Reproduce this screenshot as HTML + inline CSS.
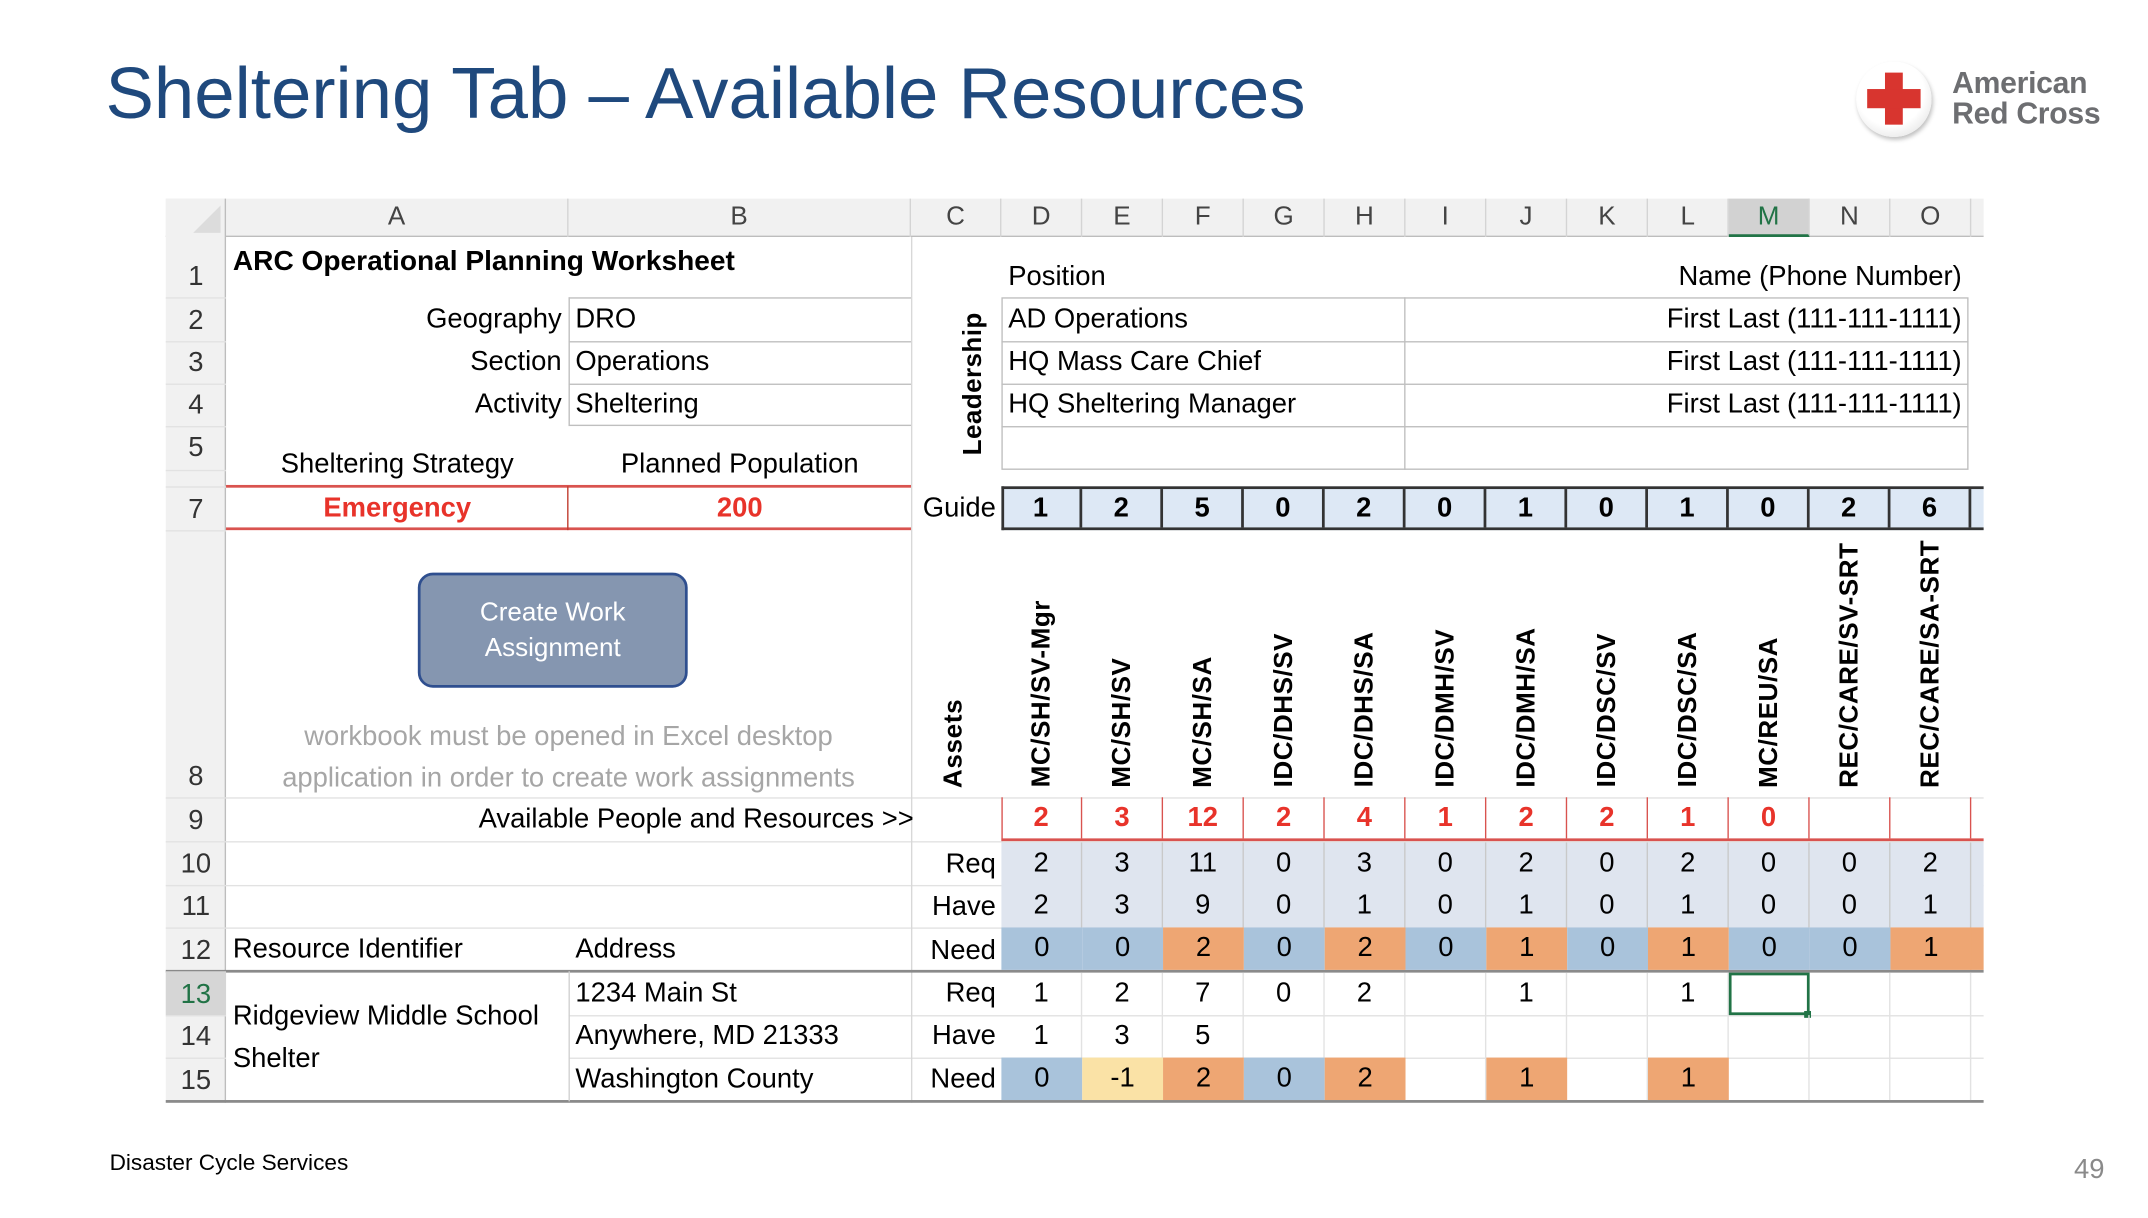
<!DOCTYPE html>
<html><head><meta charset="utf-8"><style>
*{margin:0;padding:0;box-sizing:border-box}
html,body{width:2148px;height:1218px;overflow:hidden;background:#fff}
#w{position:absolute;left:0;top:0;width:1568px;height:889px;transform:scale(1.3699);transform-origin:0 0;font-family:"Liberation Sans",sans-serif;color:#000}
.a{position:absolute;white-space:nowrap}
.t{font-size:20px;letter-spacing:0}
.rw{position:absolute;left:731px;display:flex}
.rw div{width:59px;text-align:center;border-right:1px solid #c9c9c9;font-size:20px}
.rn{position:absolute;left:121px;width:44px;text-align:center;font-size:20px;color:#333}
.ch{position:absolute;top:145px;height:28px;line-height:28px;text-align:center;font-size:19px;color:#444;border-right:1px solid #d4d4d4}
.hl{position:absolute;left:121px;width:1327px;height:1px;background:#e2e2e2}
.v{position:absolute;bottom:314px;writing-mode:vertical-rl;transform:rotate(180deg);font-weight:bold;font-size:19px;letter-spacing:0.4px;white-space:nowrap;width:22px}
.b{background:#a9c3db}.o{background:#eea673}.y{background:#fae2a6}.l{background:#dfe5ef}
</style></head><body><div id="w">
<div class="a" style="left:77px;top:38px;font-size:53px;color:#1f497d">Sheltering Tab – Available Resources</div>
<div class="a" style="left:1355px;top:45px;width:55px;height:55px;border-radius:50%;background:radial-gradient(circle at 45% 40%,#fff 55%,#e4e4e4 85%,#cfcfcf);box-shadow:1px 2px 3px rgba(0,0,0,.25)"></div>
<div class="a" style="left:1376px;top:53px;width:13px;height:38px;background:#d8352f"></div>
<div class="a" style="left:1363px;top:65px;width:39px;height:14px;background:#d8352f"></div>
<div class="a" style="left:1425px;top:50px;font-size:22px;font-weight:bold;color:#6d6e71;line-height:22px;letter-spacing:-0.2px">American<br>Red Cross</div>

<div class="a" style="left:121px;top:145px;width:1327px;height:28px;background:#f1f1f1;border-bottom:1px solid #bdbdbd"></div>
<div class="a" style="left:121px;top:145px;width:44px;height:660px;background:#f1f1f1;border-right:1px solid #bdbdbd"></div>
<div class="a" style="left:141px;top:150px;width:0;height:0;border-left:20px solid transparent;border-bottom:20px solid #dcdcdc"></div>
<div class="ch" style="left:165px;width:250px">A</div>
<div class="ch" style="left:415px;width:250px">B</div>
<div class="ch" style="left:665px;width:66px">C</div>
<div class="ch" style="left:731px;width:59px">D</div>
<div class="ch" style="left:790px;width:59px">E</div>
<div class="ch" style="left:849px;width:59px">F</div>
<div class="ch" style="left:908px;width:59px">G</div>
<div class="ch" style="left:967px;width:59px">H</div>
<div class="ch" style="left:1026px;width:59px">I</div>
<div class="ch" style="left:1085px;width:59px">J</div>
<div class="ch" style="left:1144px;width:59px">K</div>
<div class="ch" style="left:1203px;width:59px">L</div>
<div class="ch" style="left:1262px;width:59px;background:#d2d2d2;border-bottom:2px solid #217346;color:#217346">M</div>
<div class="ch" style="left:1321px;width:59px">N</div>
<div class="ch" style="left:1380px;width:59px">O</div>

<div class="hl" style="top:217px;left:121px;width:44px"></div>
<div class="hl" style="top:249px;width:44px"></div><div class="hl" style="top:280px;width:44px"></div><div class="hl" style="top:311px;width:44px"></div><div class="hl" style="top:343px;width:44px"></div><div class="hl" style="top:355px;width:44px"></div><div class="hl" style="top:387px;width:44px"></div>
<div class="hl" style="top:582px"></div><div class="hl" style="top:614px"></div><div class="hl" style="top:646px"></div><div class="hl" style="top:677px"></div><div class="hl" style="top:741px;left:121px;width:44px"></div><div class="hl" style="top:741px;left:415px;width:1033px"></div><div class="hl" style="top:772px;left:415px;width:1033px"></div><div class="hl" style="top:772px;width:44px"></div>
<div class="a" style="left:665px;top:173px;width:1px;height:632px;background:#d8d8d8"></div>
<div class="a" style="left:121px;top:708px;width:1327px;height:2px;background:#8a8a8a"></div>
<div class="a" style="left:121px;top:803px;width:1327px;height:2px;background:#8a8a8a"></div>
<div class="a" style="left:415px;top:709px;width:1px;height:95px;background:#d0d0d0"></div>
<div class="a" style="left:121px;top:709px;width:44px;height:32px;background:#d6d6d6"></div>

<div class="rn" style="top:191px">1</div><div class="rn" style="top:223px">2</div><div class="rn" style="top:254px">3</div><div class="rn" style="top:285px">4</div><div class="rn" style="top:316px">5</div><div class="rn" style="top:361px">7</div><div class="rn" style="top:556px">8</div><div class="rn" style="top:588px">9</div><div class="rn" style="top:620px">10</div><div class="rn" style="top:651px">11</div><div class="rn" style="top:683px">12</div><div class="rn" style="top:715px;color:#217346">13</div><div class="rn" style="top:746px">14</div><div class="rn" style="top:778px">15</div>

<div class="a" style="left:170px;top:179px;font-weight:bold;font-size:20.5px">ARC Operational Planning Worksheet</div>
<div class="a" style="left:415px;top:217px;width:250px;height:94px;border:1px solid #bfbfbf;border-right:none"></div>
<div class="a" style="left:415px;top:249px;width:250px;height:1px;background:#bfbfbf"></div>
<div class="a" style="left:415px;top:280px;width:250px;height:1px;background:#bfbfbf"></div>
<div class="a t" style="left:165px;width:245px;text-align:right;top:222px">Geography</div>
<div class="a t" style="left:165px;width:245px;text-align:right;top:253px">Section</div>
<div class="a t" style="left:165px;width:245px;text-align:right;top:284px">Activity</div>
<div class="a t" style="left:420px;top:222px">DRO</div>
<div class="a t" style="left:420px;top:253px">Operations</div>
<div class="a t" style="left:420px;top:284px">Sheltering</div>
<div class="a t" style="left:165px;width:250px;text-align:center;top:328px">Sheltering Strategy</div>
<div class="a t" style="left:415px;width:250px;text-align:center;top:328px">Planned Population</div>
<div class="a" style="left:165px;top:354px;width:500px;height:33px;border-top:2px solid #d9534f;border-bottom:2px solid #d9534f"></div>
<div class="a" style="left:414px;top:355px;width:1px;height:32px;background:#c0392b"></div>
<div class="a t" style="left:165px;width:250px;text-align:center;top:360px;color:#e8332a;font-weight:bold">Emergency</div>
<div class="a t" style="left:415px;width:250px;text-align:center;top:360px;color:#e8332a;font-weight:bold">200</div>
<div class="a" style="left:305px;top:418px;width:197px;height:84px;border-radius:11px;background:#8596b0;border:2px solid #2f4f8f;color:#fff;font-size:19px;text-align:center;line-height:26px;padding-top:15px">Create Work<br>Assignment</div>
<div class="a t" style="left:165px;width:500px;text-align:center;top:523px;color:#a6a6a6;line-height:30px">workbook must be opened in Excel desktop<br>application in order to create work assignments</div>
<div class="a t" style="left:165px;width:502px;text-align:right;top:587px">Available People and Resources &gt;&gt;</div>
<div class="a t" style="left:170px;top:682px">Resource Identifier</div>
<div class="a t" style="left:420px;top:682px">Address</div>
<div class="a t" style="left:170px;top:727px;line-height:31px">Ridgeview Middle School<br>Shelter</div>
<div class="a t" style="left:420px;top:714px">1234 Main St</div>
<div class="a t" style="left:420px;top:745px">Anywhere, MD 21333</div>
<div class="a t" style="left:420px;top:777px">Washington County</div>

<div class="v" style="left:700px;bottom:auto;top:228px;font-size:19px;letter-spacing:0.3px">Leadership</div>
<div class="a t" style="left:736px;top:191px">Position</div>
<div class="a t" style="left:1030px;width:402px;text-align:right;top:191px">Name (Phone Number)</div>
<div class="a" style="left:731px;top:217px;width:706px;height:126px;border:1px solid #bfbfbf"></div>
<div class="a" style="left:731px;top:249px;width:706px;height:1px;background:#bfbfbf"></div>
<div class="a" style="left:731px;top:280px;width:706px;height:1px;background:#bfbfbf"></div>
<div class="a" style="left:731px;top:311px;width:706px;height:1px;background:#bfbfbf"></div>
<div class="a" style="left:1025px;top:217px;width:1px;height:126px;background:#bfbfbf"></div>
<div class="a t" style="left:736px;top:222px">AD Operations</div>
<div class="a t" style="left:736px;top:253px">HQ Mass Care Chief</div>
<div class="a t" style="left:736px;top:284px">HQ Sheltering Manager</div>
<div class="a t" style="left:1030px;width:402px;text-align:right;top:222px">First Last (111-111-1111)</div>
<div class="a t" style="left:1030px;width:402px;text-align:right;top:253px">First Last (111-111-1111)</div>
<div class="a t" style="left:1030px;width:402px;text-align:right;top:284px">First Last (111-111-1111)</div>

<div class="a t" style="left:665px;width:62px;text-align:right;top:360px">Guide</div>
<div class="a" style="left:731px;top:355px;width:717px;height:32px;background:#dde8f5;border-top:2px solid #333;border-bottom:2px solid #333;border-left:2px solid #333"></div>
<div class="rw" style="top:357px;font-weight:bold"><div style="line-height:28px;border-right:2px solid #333;font-weight:bold">1</div><div style="line-height:28px;border-right:2px solid #333;font-weight:bold">2</div><div style="line-height:28px;border-right:2px solid #333;font-weight:bold">5</div><div style="line-height:28px;border-right:2px solid #333;font-weight:bold">0</div><div style="line-height:28px;border-right:2px solid #333;font-weight:bold">2</div><div style="line-height:28px;border-right:2px solid #333;font-weight:bold">0</div><div style="line-height:28px;border-right:2px solid #333;font-weight:bold">1</div><div style="line-height:28px;border-right:2px solid #333;font-weight:bold">0</div><div style="line-height:28px;border-right:2px solid #333;font-weight:bold">1</div><div style="line-height:28px;border-right:2px solid #333;font-weight:bold">0</div><div style="line-height:28px;border-right:2px solid #333;font-weight:bold">2</div><div style="line-height:28px;border-right:2px solid #333;font-weight:bold">6</div></div>

<div class="v" style="left:686px;letter-spacing:0.5px">Assets</div>
<div class="v" style="left:750px">MC/SH/SV-Mgr</div>
<div class="v" style="left:809px">MC/SH/SV</div>
<div class="v" style="left:868px">MC/SH/SA</div>
<div class="v" style="left:927px">IDC/DHS/SV</div>
<div class="v" style="left:986px">IDC/DHS/SA</div>
<div class="v" style="left:1045px">IDC/DMH/SV</div>
<div class="v" style="left:1104px">IDC/DMH/SA</div>
<div class="v" style="left:1163px">IDC/DSC/SV</div>
<div class="v" style="left:1222px">IDC/DSC/SA</div>
<div class="v" style="left:1281px">MC/REU/SA</div>
<div class="v" style="left:1340px">REC/CARE/SV-SRT</div>
<div class="v" style="left:1399px">REC/CARE/SA-SRT</div>

<div class="a" style="left:731px;top:582px;width:717px;height:32px;border-bottom:2px solid #d9534f;border-left:1px solid #d9534f"></div>
<div class="rw" style="top:582px;color:#e8332a;font-weight:bold"><div style="line-height:30px;border-right:1px solid #d9534f;font-weight:bold">2</div><div style="line-height:30px;border-right:1px solid #d9534f;font-weight:bold">3</div><div style="line-height:30px;border-right:1px solid #d9534f;font-weight:bold">12</div><div style="line-height:30px;border-right:1px solid #d9534f;font-weight:bold">2</div><div style="line-height:30px;border-right:1px solid #d9534f;font-weight:bold">4</div><div style="line-height:30px;border-right:1px solid #d9534f;font-weight:bold">1</div><div style="line-height:30px;border-right:1px solid #d9534f;font-weight:bold">2</div><div style="line-height:30px;border-right:1px solid #d9534f;font-weight:bold">2</div><div style="line-height:30px;border-right:1px solid #d9534f;font-weight:bold">1</div><div style="line-height:30px;border-right:1px solid #d9534f;font-weight:bold">0</div><div style="line-height:30px;border-right:1px solid #d9534f"></div><div style="line-height:30px;border-right:1px solid #d9534f"></div></div>

<div class="a t" style="left:665px;width:62px;text-align:right;top:620px">Req</div>
<div class="a t" style="left:665px;width:62px;text-align:right;top:651px">Have</div>
<div class="a t" style="left:665px;width:62px;text-align:right;top:683px">Need</div>
<div class="a l" style="left:731px;top:615px;width:717px;height:62px"></div>
<div class="rw" style="top:615px"><div style="line-height:31px">2</div><div style="line-height:31px">3</div><div style="line-height:31px">11</div><div style="line-height:31px">0</div><div style="line-height:31px">3</div><div style="line-height:31px">0</div><div style="line-height:31px">2</div><div style="line-height:31px">0</div><div style="line-height:31px">2</div><div style="line-height:31px">0</div><div style="line-height:31px">0</div><div style="line-height:31px">2</div></div>
<div class="rw" style="top:646px"><div style="line-height:31px">2</div><div style="line-height:31px">3</div><div style="line-height:31px">9</div><div style="line-height:31px">0</div><div style="line-height:31px">1</div><div style="line-height:31px">0</div><div style="line-height:31px">1</div><div style="line-height:31px">0</div><div style="line-height:31px">1</div><div style="line-height:31px">0</div><div style="line-height:31px">0</div><div style="line-height:31px">1</div></div>
<div class="a o" style="left:1438px;top:677px;width:10px;height:31px"></div>
<div class="rw" style="top:677px"><div class="b" style="line-height:31px;border:none">0</div><div class="b" style="line-height:31px;border:none">0</div><div class="o" style="line-height:31px;border:none">2</div><div class="b" style="line-height:31px;border:none">0</div><div class="o" style="line-height:31px;border:none">2</div><div class="b" style="line-height:31px;border:none">0</div><div class="o" style="line-height:31px;border:none">1</div><div class="b" style="line-height:31px;border:none">0</div><div class="o" style="line-height:31px;border:none">1</div><div class="b" style="line-height:31px;border:none">0</div><div class="b" style="line-height:31px;border:none">0</div><div class="o" style="line-height:31px;border:none">1</div></div>

<div class="a t" style="left:665px;width:62px;text-align:right;top:714px">Req</div>
<div class="a t" style="left:665px;width:62px;text-align:right;top:745px">Have</div>
<div class="a t" style="left:665px;width:62px;text-align:right;top:777px">Need</div>
<div class="rw" style="top:710px"><div style="line-height:31px;border-color:#e2e2e2">1</div><div style="line-height:31px;border-color:#e2e2e2">2</div><div style="line-height:31px;border-color:#e2e2e2">7</div><div style="line-height:31px;border-color:#e2e2e2">0</div><div style="line-height:31px;border-color:#e2e2e2">2</div><div style="line-height:31px;border-color:#e2e2e2"></div><div style="line-height:31px;border-color:#e2e2e2">1</div><div style="line-height:31px;border-color:#e2e2e2"></div><div style="line-height:31px;border-color:#e2e2e2">1</div><div style="height:31px;border:2px solid #217346"></div><div style="line-height:31px;border-color:#e2e2e2"></div><div style="line-height:31px;border-color:#e2e2e2"></div></div>
<div class="a" style="left:1317px;top:738px;width:5px;height:5px;background:#217346"></div>
<div class="rw" style="top:741px"><div style="line-height:31px;border-color:#e2e2e2">1</div><div style="line-height:31px;border-color:#e2e2e2">3</div><div style="line-height:31px;border-color:#e2e2e2">5</div><div style="height:31px;border-color:#e2e2e2"></div><div style="height:31px;border-color:#e2e2e2"></div><div style="height:31px;border-color:#e2e2e2"></div><div style="height:31px;border-color:#e2e2e2"></div><div style="height:31px;border-color:#e2e2e2"></div><div style="height:31px;border-color:#e2e2e2"></div><div style="height:31px;border-color:#e2e2e2"></div><div style="height:31px;border-color:#e2e2e2"></div><div style="height:31px;border-color:#e2e2e2"></div></div>
<div class="rw" style="top:772px"><div class="b" style="line-height:31px;border:none">0</div><div class="y" style="line-height:31px;border:none">-1</div><div class="o" style="line-height:31px;border:none">2</div><div class="b" style="line-height:31px;border:none">0</div><div class="o" style="line-height:31px;border:none">2</div><div style="height:31px;border-color:#e2e2e2"></div><div class="o" style="line-height:31px;border:none">1</div><div style="height:31px;border-color:#e2e2e2"></div><div class="o" style="line-height:31px;border:none">1</div><div style="height:31px;border-color:#e2e2e2"></div><div style="height:31px;border-color:#e2e2e2"></div><div style="height:31px;border-color:#e2e2e2"></div></div>

<div class="a" style="left:80px;top:840px;font-size:16.5px">Disaster Cycle Services</div>
<div class="a" style="left:1514px;top:843px;font-size:20px;color:#8a8a8a">49</div>
</div></body></html>
